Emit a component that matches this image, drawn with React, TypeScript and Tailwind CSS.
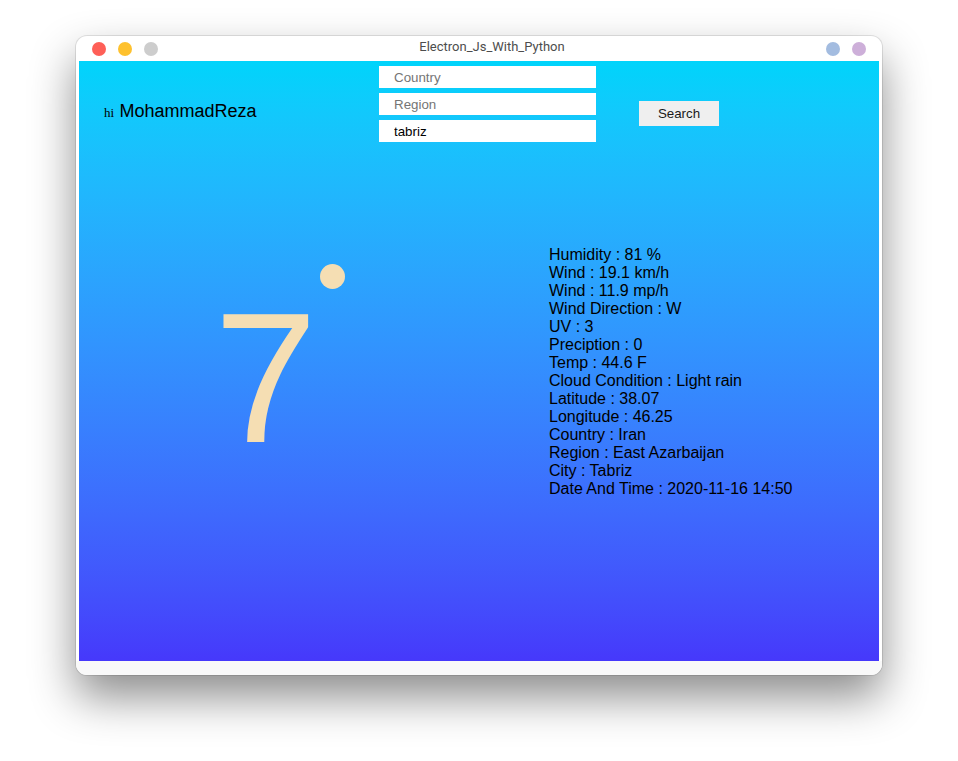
import React from 'react';

const details = [
  'Humidity : 81 %',
  'Wind : 19.1 km/h',
  'Wind : 11.9 mp/h',
  'Wind Direction : W',
  'UV : 3',
  'Preciption : 0',
  'Temp : 44.6 F',
  'Cloud Condition : Light rain',
  'Latitude : 38.07',
  'Longitude : 46.25',
  'Country : Iran',
  'Region : East Azarbaijan',
  'City : Tabriz',
  'Date And Time : 2020-11-16 14:50',
];

const App: React.FC = () => {
  return (
    <div className="w-[958px] h-[761px] bg-white pl-[76px] pt-[36px] font-['Liberation_Sans',Arial,sans-serif]">
      <div className="w-[806px] h-[639px] flex flex-col rounded-[11px] bg-white shadow-[0_22px_45px_rgba(0,0,0,0.45)] ring-1 ring-black/10 overflow-hidden">
        {/* Title bar */}
        <div className="relative h-[25px] flex items-center px-[16px]">
          <div className="flex items-center gap-[12px]">
            <span className="w-[14px] h-[14px] rounded-full bg-[#fe5f57]" />
            <span className="w-[14px] h-[14px] rounded-full bg-[#fec12e]" />
            <span className="w-[14px] h-[14px] rounded-full bg-[#cdcdcd]" />
          </div>
          <div className="flex-1 text-center text-[13px] text-[#4d4d4d] font-['Roboto','Noto_Sans',sans-serif] -mt-[4px]">
            Electron_Js_With_Python
          </div>
          <div className="flex items-center gap-[12px]">
            <span className="w-[14px] h-[14px] rounded-full bg-[#a3bce0]" />
            <span className="w-[14px] h-[14px] rounded-full bg-[#cdafd9]" />
          </div>
        </div>

        {/* Content */}
        <div className="px-[3px]">
          <div className="w-[800px] h-[600px] bg-gradient-to-b from-[#00d4fb] to-[#4638fb] text-black">
            {/* Header */}
            <div className="flex items-start pt-[5px]">
              <div className="w-[300px] pl-[25px] mt-[32px] leading-normal">
                <span className="font-['Liberation_Serif',serif] text-[13px]">hi</span>{' '}
                <span className="text-[18px] ml-[1px]">MohammadReza</span>
              </div>
              <div className="flex flex-col gap-[5px] w-[217px]">
                <input
                  placeholder="Country"
                  className="h-[22px] bg-white pl-[15px] text-[13.33px] outline-none placeholder:text-[#757575]"
                />
                <input
                  placeholder="Region"
                  className="h-[22px] bg-white pl-[15px] text-[13.33px] outline-none placeholder:text-[#757575]"
                />
                <input
                  defaultValue="tabriz"
                  className="h-[22px] bg-white pl-[15px] text-[13.33px] outline-none"
                />
              </div>
              <button className="ml-[43px] mt-[35px] w-[80px] h-[25px] bg-[#efefef] text-[13.33px] text-[#1a1a1a]">
                Search
              </button>
            </div>

            {/* Main */}
            <div className="flex items-start mt-[104px] pl-[135px]">
              <div className="w-[335px] flex items-start mt-[18px]">
                <span className="text-[186px] leading-none text-[#f5deb3] mt-[21px]">7</span>
                <span className="w-[25px] h-[25px] rounded-full bg-[#f5deb3] ml-[3px]" />
              </div>
              <div className="text-[16px] leading-[18px]">
                {details.map((line) => (
                  <div key={line}>{line}</div>
                ))}
              </div>
            </div>
          </div>
        </div>

        <div className="flex-1 bg-[#f9f9f9]" />
      </div>
    </div>
  );
};

export default App;
